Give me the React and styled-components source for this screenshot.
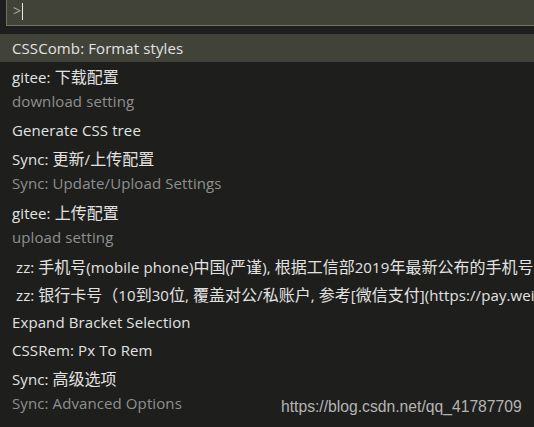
import React from 'react'
import styled, { createGlobalStyle } from 'styled-components'

const GlobalStyle = createGlobalStyle`
  html, body {
    margin: 0;
    padding: 0;
    background: #1e1f1c;
    overflow: hidden;
  }
`

const items = [
  { label: 'CSSComb: Format styles', selected: true },
  { label: 'gitee: 下载配置', detail: 'download setting' },
  { label: 'Generate CSS tree' },
  { label: 'Sync: 更新/上传配置', detail: 'Sync: Update/Upload Settings' },
  { label: 'gitee: 上传配置', detail: 'upload setting' },
  { label: ' zz: 手机号(mobile phone)中国(严谨), 根据工信部2019年最新公布的手机号段' },
  { label: ' zz: 银行卡号（10到30位, 覆盖对公/私账户, 参考[微信支付](https://pay.weixin.qq.com)' },
  { label: 'Expand Bracket Selection' },
  { label: 'CSSRem: Px To Rem' },
  { label: 'Sync: 高级选项', detail: 'Sync: Advanced Options' },
]

// split a label so CJK runs can get the wider Yahei-like size
const splitCjk = (text) =>
  text.split(/([\u3000-\u9fff\uff00-\uffef]+)/).map((part, i) =>
    /[\u3000-\u9fff\uff00-\uffef]/.test(part) ? <Cjk key={i}>{part}</Cjk> : part
  )

function App() {
  return (
    <Page>
      <GlobalStyle />
      <InputBox>
        <Prompt>&gt;</Prompt>
        <Caret />
      </InputBox>
      <List>
        {items.map((item, i) => (
          <Row key={i} $selected={item.selected} $double={!!item.detail}>
            <Label>{splitCjk(item.label)}</Label>
            {item.detail && <Detail>{item.detail}</Detail>}
          </Row>
        ))}
      </List>
      <Watermark>https://blog.csdn.net/qq_41787709</Watermark>
    </Page>
  )
}

export default App

const Page = styled.div`
  position: relative;
  width: 534px;
  height: 427px;
  background: #1e1f1c;
  font-family: "Open Sans", "Noto Sans CJK SC", sans-serif;
  overflow: hidden;
`

const InputBox = styled.div`
  display: flex;
  align-items: center;
  margin-left: 6px;
  width: 540px;
  height: 26px;
  background: #414339;
  border-left: 1px solid #75715e;
  border-bottom: 1px solid #75715e;
  box-sizing: border-box;
  padding-left: 6px;
`

const Prompt = styled.span`
  color: #a8a8a0;
  font-size: 14px;
  line-height: 1;
  margin-top: -3px;
`

const Caret = styled.span`
  width: 1px;
  height: 17px;
  margin-left: 1px;
  margin-top: -3px;
  background: #e8e8e8;
`

const List = styled.div`
  display: flex;
  flex-direction: column;
  margin-top: 8px;
`

const Row = styled.div`
  display: flex;
  flex-direction: column;
  padding: 0 0 0 12px;
  height: ${p => (p.$double ? '54px' : '28px')};
  background: ${p => (p.$selected ? '#414339' : 'transparent')};
  white-space: pre;
  overflow: hidden;
`

const Label = styled.div`
  color: #e2e2e2;
  font-size: 15px;
  line-height: 28px;
  letter-spacing: 0.1px;
`

const Cjk = styled.span`
  font-family: "Noto Sans CJK SC", sans-serif;
  font-size: 16px;
  letter-spacing: 0;
`

const Detail = styled.div`
  color: #8f8f8f;
  font-size: 15px;
  line-height: 22px;
  margin-top: -1px;
  letter-spacing: 0.1px;
`

const Watermark = styled.div`
  position: absolute;
  left: 281px;
  top: 397px;
  color: #b4b4b4;
  font-family: "Liberation Sans", Arial, sans-serif;
  font-size: 15.7px;
  line-height: 20px;
`
